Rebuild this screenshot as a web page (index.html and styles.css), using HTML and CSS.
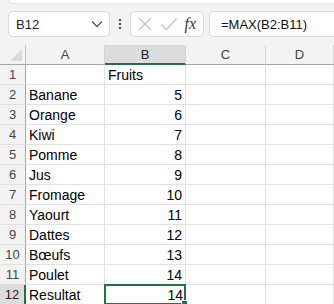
FILE: index.html
```html
<!DOCTYPE html>
<html lang="fr">

<head>
    <meta charset="UTF-8">
    <meta name="viewport" content="width=device-width, initial-scale=1.0">
    <title>Classeur</title>
    <link rel="stylesheet" href="styles.css">
</head>

<body>
    <div class="ribbon-edge"></div>

    <div class="formula-bar">
        <div class="name-box">
            <span>B12</span>
            <svg class="chevron" width="12" height="8" viewBox="0 0 12 8">
                <path d="M1 1.5 L6 6.5 L11 1.5" fill="none" stroke="#555" stroke-width="1.3" />
            </svg>
        </div>
        <div class="more">
            <span></span><span></span><span></span>
        </div>
        <div class="actions">
            <svg width="16" height="16" viewBox="0 0 16 16">
                <path d="M2 2 L14 14 M14 2 L2 14" stroke="#c4c4c4" stroke-width="1.3" fill="none" />
            </svg>
            <svg width="18" height="16" viewBox="0 0 18 16">
                <path d="M1.5 8.5 L6.5 13.5 L16.5 2.5" stroke="#c4c4c4" stroke-width="1.3" fill="none" />
            </svg>
            <span class="fx">fx</span>
        </div>
        <div class="formula">=MAX(B2:B11)</div>
    </div>

    <div class="sheet">
        <div class="corner"><span class="corner-tri"></span></div>
        <div class="col-head">A</div>
        <div class="col-head active">B</div>
        <div class="col-head">C</div>
        <div class="col-head">D</div>

        <div class="row-head">1</div>
        <div class="cell"></div>
        <div class="cell">Fruits</div>
        <div class="cell"></div>
        <div class="cell"></div>

        <div class="row-head">2</div>
        <div class="cell">Banane</div>
        <div class="cell num">5</div>
        <div class="cell"></div>
        <div class="cell"></div>

        <div class="row-head">3</div>
        <div class="cell">Orange</div>
        <div class="cell num">6</div>
        <div class="cell"></div>
        <div class="cell"></div>

        <div class="row-head">4</div>
        <div class="cell">Kiwi</div>
        <div class="cell num">7</div>
        <div class="cell"></div>
        <div class="cell"></div>

        <div class="row-head">5</div>
        <div class="cell">Pomme</div>
        <div class="cell num">8</div>
        <div class="cell"></div>
        <div class="cell"></div>

        <div class="row-head">6</div>
        <div class="cell">Jus</div>
        <div class="cell num">9</div>
        <div class="cell"></div>
        <div class="cell"></div>

        <div class="row-head">7</div>
        <div class="cell">Fromage</div>
        <div class="cell num">10</div>
        <div class="cell"></div>
        <div class="cell"></div>

        <div class="row-head">8</div>
        <div class="cell">Yaourt</div>
        <div class="cell num">11</div>
        <div class="cell"></div>
        <div class="cell"></div>

        <div class="row-head">9</div>
        <div class="cell">Dattes</div>
        <div class="cell num">12</div>
        <div class="cell"></div>
        <div class="cell"></div>

        <div class="row-head">10</div>
        <div class="cell">Bœufs</div>
        <div class="cell num">13</div>
        <div class="cell"></div>
        <div class="cell"></div>

        <div class="row-head">11</div>
        <div class="cell">Poulet</div>
        <div class="cell num">14</div>
        <div class="cell"></div>
        <div class="cell"></div>

        <div class="row-head active">12</div>
        <div class="cell">Resultat</div>
        <div class="cell num selected">14<span class="handle"></span></div>
        <div class="cell"></div>
        <div class="cell"></div>
    </div>
</body>

</html>
```

FILE: styles.css
```css
body {
    margin: 0;
    background: #f3f3f3;
    font-family: 'Liberation Sans', Arial, sans-serif;
    width: 334px;
    height: 304px;
    overflow: hidden;
}

.ribbon-edge {
    height: 3px;
    margin-left: 8px;
    background: #fff;
    border-bottom: 1px solid #e3e3e3;
    border-left: 1px solid #e3e3e3;
    border-bottom-left-radius: 6px;
}

.formula-bar {
    display: flex;
    align-items: center;
    height: 26px;
    margin-top: 7px;
    padding-left: 8px;
}

.name-box,
.actions,
.formula {
    box-sizing: border-box;
    height: 26px;
    background: #fff;
    border: 1px solid #dadada;
    border-radius: 5px;
    display: flex;
    align-items: center;
}

.name-box {
    width: 102px;
    padding: 0 6px 0 7px;
    justify-content: space-between;
    font-size: 13px;
    color: #222;
}

.more {
    width: 20px;
    display: flex;
    flex-direction: column;
    align-items: center;
    gap: 2px;
}

.more span {
    width: 2px;
    height: 2px;
    background: #444;
}

.actions {
    width: 74px;
    padding: 0 6px 0 6px;
    justify-content: space-between;
}

.fx {
    font-family: 'Liberation Serif', 'Times New Roman', serif;
    font-style: italic;
    font-size: 16px;
    color: #333;
    margin-right: 1px;
}

.formula {
    flex: 1;
    margin-left: 5px;
    padding-left: 11px;
    border-right: none;
    border-radius: 5px 0 0 5px;
    font-size: 13px;
    color: #111;
}

.sheet {
    display: grid;
    grid-template-columns: 26px 79px 81px 80px 1fr;
    grid-auto-rows: 20px;
    margin-top: 8px;
    background: #fff;
}

.corner,
.col-head,
.row-head {
    background: #f3f3f3;
    color: #444;
    font-size: 13px;
    display: flex;
    align-items: center;
    justify-content: center;
    box-sizing: border-box;
}

.corner {
    position: relative;
    border-right: 1px solid #c6c6c6;
    border-bottom: 1px solid #a6a6a6;
}

.corner-tri {
    position: absolute;
    right: 3px;
    bottom: 3px;
    width: 0;
    height: 0;
    border-left: 12px solid transparent;
    border-bottom: 12px solid #dadada;
}

.col-head {
    border-right: 1px solid #d4d4d4;
    border-bottom: 1px solid #a6a6a6;
}

.col-head.active {
    background: #dcdcdc;
    color: #222;
    border-bottom: 2px solid #217346;
}

.row-head {
    border-right: 1px solid #a6a6a6;
    border-bottom: 1px solid #e1e1e1;
}

.row-head.active {
    background: #dcdcdc;
    color: #222;
    border-right: 2px solid #217346;
}

.cell {
    box-sizing: border-box;
    border-right: 1px solid #e1e1e1;
    border-bottom: 1px solid #e1e1e1;
    font-size: 14px;
    color: #000;
    padding: 0 3px;
    display: flex;
    align-items: center;
    white-space: nowrap;
}

.cell.num {
    justify-content: flex-end;
}

.cell.selected {
    position: relative;
    border: 2px solid #217346;
    margin: -1px 0 0 -1px;
    padding-right: 1px;
}

.handle {
    position: absolute;
    right: -4px;
    bottom: -4px;
    width: 5px;
    height: 5px;
    background: #217346;
    border: 1px solid #fff;
}
```
